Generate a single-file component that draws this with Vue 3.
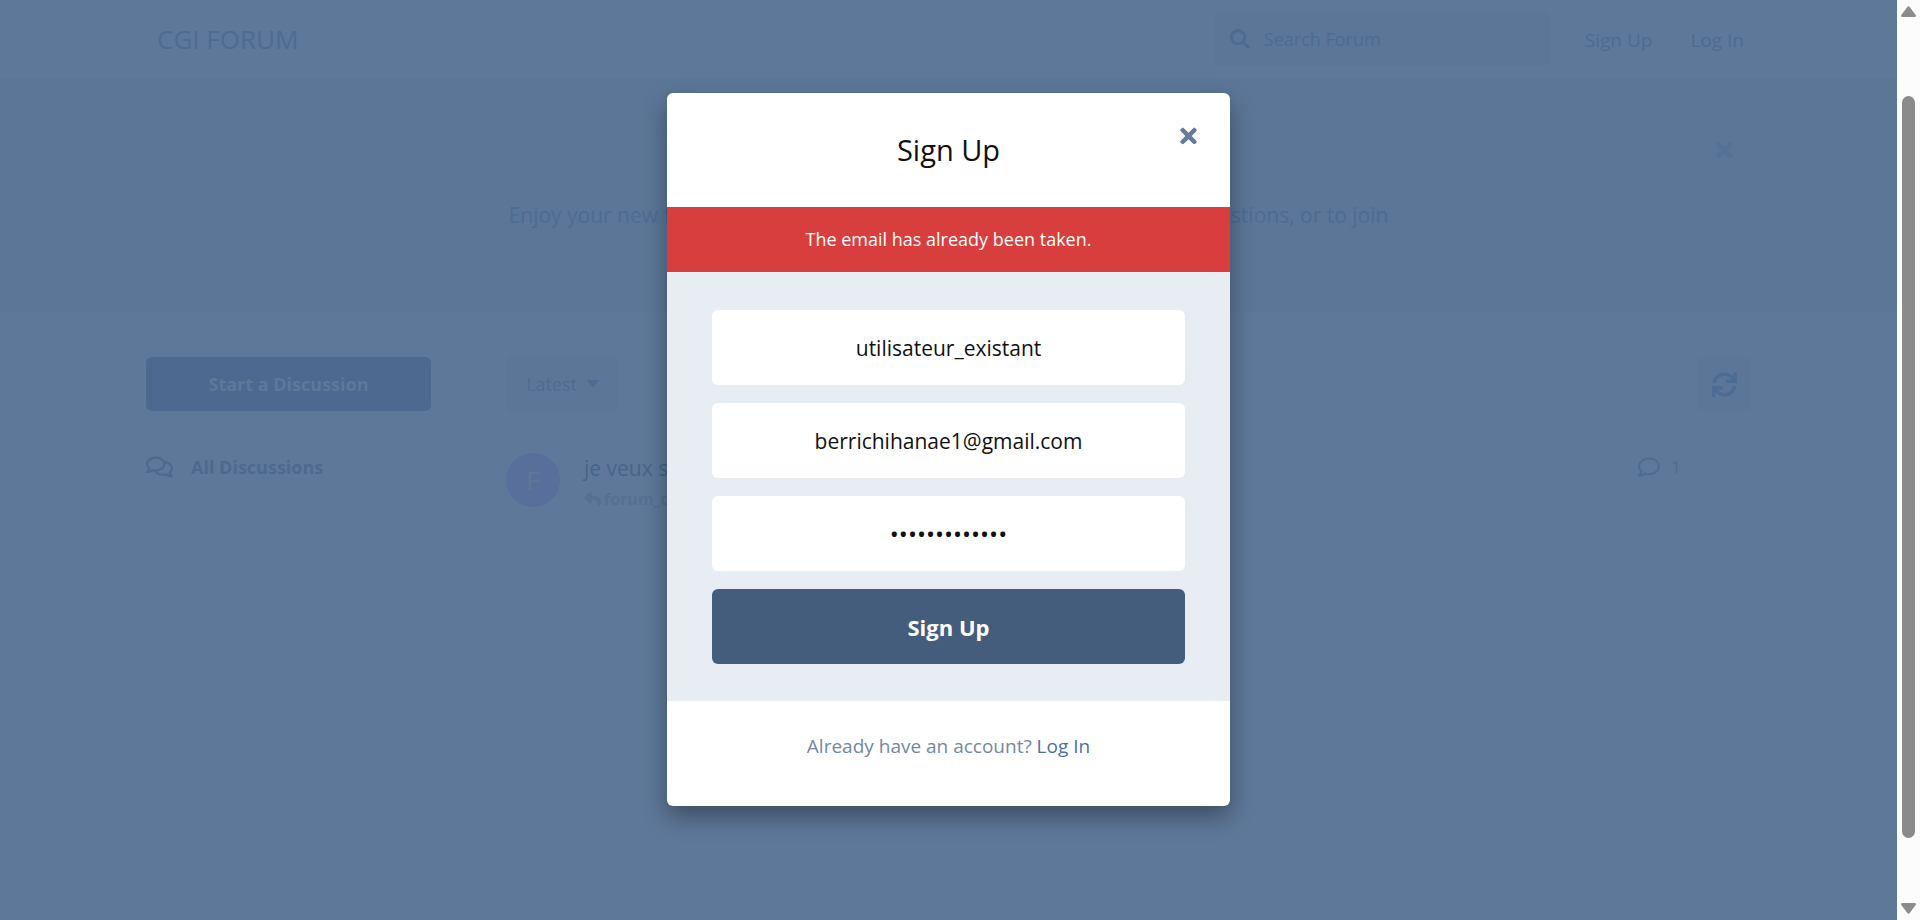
<script setup>
import { ref } from 'vue'

const username = ref('utilisateur_existant')
const email = ref('berrichihanae1@gmail.com')
const password = ref('motdepasse123')
const search = ref('')

const icons = {
  times: 'M242.72 256l100.07-100.07c12.28-12.28 12.28-32.19 0-44.48l-22.24-22.24c-12.28-12.28-32.19-12.28-44.48 0L176 189.28 75.93 89.21c-12.28-12.28-32.19-12.28-44.48 0L9.21 111.45c-12.28 12.28-12.28 32.19 0 44.48L109.28 256 9.21 356.07c-12.28 12.28-12.28 32.19 0 44.48l22.24 22.24c12.28 12.28 32.2 12.28 44.48 0L176 322.72l100.07 100.07c12.28 12.28 32.2 12.28 44.48 0l22.24-22.24c12.28-12.28 12.28-32.19 0-44.48L242.72 256z',
  search: 'M505 442.7L405.3 343c-4.5-4.5-10.6-7-17-7H372c27.6-35.3 44-79.7 44-128C416 93.1 322.9 0 208 0S0 93.1 0 208s93.1 208 208 208c48.3 0 92.7-16.4 128-44v16.3c0 6.4 2.5 12.5 7 17l99.7 99.7c9.4 9.4 24.6 9.4 33.9 0l28.3-28.3c9.4-9.4 9.4-24.6.1-34zM208 336c-70.7 0-128-57.2-128-128 0-70.7 57.2-128 128-128 70.7 0 128 57.2 128 128 0 70.7-57.2 128-128 128z',
  reply: 'M8.309 189.836L184.313 37.851C199.719 24.546 224 35.347 224 56.015v80.053c160.629 1.839 288 34.032 288 186.258 0 61.441-39.581 122.309-83.333 154.132-13.653 9.931-33.111-2.533-28.077-18.631 45.344-145.012-21.507-183.51-176.59-185.742V360c0 20.7-24.3 31.453-39.687 18.164l-176.004-152c-11.071-9.562-11.086-26.753 0-36.328z',
  comment: 'M256 32C114.6 32 0 125.1 0 240c0 47.6 19.9 91.2 52.9 126.3C38 405.7 7 439.1 6.5 439.5c-6.6 7-8.4 17.2-4.6 26S14.4 480 24 480c61.5 0 110-25.7 139.1-46.3C192 442.8 223.2 448 256 448c141.4 0 256-93.1 256-208S397.4 32 256 32zm0 368c-26.7 0-53.1-4.1-78.4-12.1l-22.7-7.2-19.5 13.8c-14.3 10.1-33.9 21.4-57.5 29 7.3-12.1 14.4-25.7 19.9-40.2l10.6-28.1-20.6-21.8C69.7 314.1 48 282.2 48 240c0-88.2 93.3-160 208-160s208 71.8 208 160-93.3 160-208 160z',
  comments: 'M532 386.2c27.5-27.1 44-61.1 44-98.2 0-80-76.5-146.1-176.2-157.9C368.3 72.5 294.3 32 208 32 93.1 32 0 103.6 0 192c0 37 16.5 71 44 98.2-15.3 30.7-37.3 54.5-37.7 54.9-6.3 6.7-8.1 16.5-4.4 25 3.6 8.5 12 14 21.2 14 53.5 0 96.7-20.2 125.2-38.8 9.2 2.1 18.7 3.7 28.4 4.9C208.1 407.6 281.8 448 368 448c20.8 0 40.8-2.4 59.8-6.8C456.3 459.7 499.4 480 553 480c9.2 0 17.5-5.5 21.2-14 3.6-8.5 1.9-18.3-4.4-25-.4-.3-22.5-24.1-37.8-54.8zm-392.8-92.3L122.1 305c-14.1 9.1-28.5 16.3-43.1 21.4 2.7-4.7 5.4-9.7 8-14.8l15.5-31.1L77.7 256C64.2 242.6 48 220.7 48 192c0-60.7 73.3-112 160-112s160 51.3 160 112-73.3 112-160 112c-16.5 0-33-1.9-49-5.6l-19.8-4.5zM498.3 352l-24.7 24.4 15.5 31.1c2.6 5.1 5.3 10.1 8 14.8-14.6-5.1-29-12.3-43.1-21.4l-17.1-11.1-19.9 4.6c-16 3.7-32.5 5.6-49 5.6-54 0-102.2-20.1-131.3-49.7C338 339.5 416 272.9 416 192c0-3.4-.4-6.7-.7-10C479.7 196.5 528 238.8 528 288c0 28.7-16.2 50.6-29.7 64z',
  sync: 'M440.65 12.57l4 82.77A247.16 247.16 0 0 0 255.83 8C134.73 8 33.91 94.92 12.29 209.82A12 12 0 0 0 24.09 224h49.05a12 12 0 0 0 11.67-9.26 175.91 175.91 0 0 1 317-56.94l-101.46-4.86a12 12 0 0 0-12.57 12v47.41a12 12 0 0 0 12 12H500a12 12 0 0 0 12-12V12a12 12 0 0 0-12-12h-47.37a12 12 0 0 0-11.98 12.57zM255.83 432a175.61 175.61 0 0 1-146-77.8l101.8 4.87a12 12 0 0 0 12.57-12v-47.4a12 12 0 0 0-12-12H12a12 12 0 0 0-12 12V500a12 12 0 0 0 12 12h47.35a12 12 0 0 0 12-12.6l-4.15-82.57A247.17 247.17 0 0 0 255.83 504c121.11 0 221.93-86.92 243.55-201.82a12 12 0 0 0-11.8-14.18h-49.05a12 12 0 0 0-11.67 9.26A175.86 175.86 0 0 1 255.83 432z',
}
</script>

<template>
  <div class="window">
    <div class="page">
      <header class="header">
        <a class="brand" href="#">CGI FORUM</a>
        <div class="header-side">
          <label class="search">
            <svg class="icon-search" viewBox="0 0 512 512" aria-hidden="true"><path :d="icons.search" /></svg>
            <input v-model="search" type="search" placeholder="Search Forum" aria-label="Search Forum" />
          </label>
          <nav class="session">
            <button type="button">Sign Up</button>
            <button type="button">Log In</button>
          </nav>
        </div>
      </header>

      <section class="hero">
        <button class="hero-close" type="button" aria-label="Dismiss">
          <svg class="icon-times" viewBox="0 0 352 512" aria-hidden="true"><path :d="icons.times" /></svg>
        </button>
        <p>Enjoy your new forum! Hop over to discuss.flarum.org if you have any questions, or to join</p>
      </section>

      <main class="content">
        <aside class="sidebar">
          <button class="start" type="button">Start a Discussion</button>
          <a class="all" href="#">
            <svg viewBox="0 0 576 512" aria-hidden="true"><path :d="icons.comments" /></svg>
            All Discussions
          </a>
        </aside>
        <div class="listing">
          <div class="toolbar">
            <button class="sort" type="button">
              Latest
              <svg viewBox="0 0 12 8" aria-hidden="true"><path d="M1 0h10q1 0 .6 1L6.700 7q-.7.8-1.400 0L.4 1Q0 0 1 0z" /></svg>
            </button>
            <button class="refresh" type="button" aria-label="Refresh">
              <svg viewBox="0 0 512 512" aria-hidden="true"><path :d="icons.sync" /></svg>
            </button>
          </div>
          <article class="discussion">
            <span class="avatar">F</span>
            <div class="summary">
              <h3>je veux s</h3>
              <div class="reply">
                <svg viewBox="0 0 512 512" aria-hidden="true"><path :d="icons.reply" /></svg>
                <strong>forum_c</strong>
              </div>
            </div>
            <span class="count">
              <svg viewBox="0 0 512 512" aria-hidden="true"><path :d="icons.comment" /></svg>
              1
            </span>
          </article>
        </div>
      </main>

      <div class="overlay">
        <section class="modal" role="dialog" aria-modal="true" aria-labelledby="modal-title">
          <div class="modal-head">
            <h2 id="modal-title">Sign Up</h2>
            <button class="modal-close" type="button" aria-label="Close">
              <svg class="icon-times" viewBox="0 0 352 512" aria-hidden="true"><path :d="icons.times" /></svg>
            </button>
          </div>
          <div class="alert" role="alert">The email has already been taken.</div>
          <form class="fields" @submit.prevent>
            <input v-model="username" type="text" aria-label="Username" />
            <input v-model="email" type="email" aria-label="Email" />
            <input v-model="password" type="password" aria-label="Password" />
            <button type="submit">Sign Up</button>
          </form>
          <p class="modal-foot">Already have an account? <a href="#">Log In</a></p>
        </section>
      </div>
    </div>

    <div class="scrollbar" aria-hidden="true">
      <svg viewBox="0 0 15 11"><path d="M6.300 1Q7.500-.5 8.700 1l6 8q.8 2-1.200 2h-12q-2 0-1.200-2z" /></svg>
      <div class="track"><div class="thumb"></div></div>
      <svg viewBox="0 0 15 11"><path d="M6.300 10q1.200 1.500 2.400 0l6-8q.8-2-1.200-2h-12q-2 0-1.200 2z" /></svg>
    </div>
  </div>
</template>

<style>
body {
  margin: 0;
  overflow: hidden;
}
</style>

<style scoped>
.window {
  display: grid;
  grid-template-columns: 1fr 23px;
  height: 100vh;
  font-family: "Open Sans", "Noto Sans", sans-serif;
  font-size: 18px;
  line-height: 28px;
  color: #4d6c94;
}
.window * {
  box-sizing: border-box;
}
button,
input {
  font: inherit;
  color: inherit;
  border: 0;
  margin: 0;
  padding: 0;
  background: none;
  outline: 0;
}
button {
  cursor: pointer;
}
a {
  color: inherit;
  text-decoration: none;
}
svg {
  display: block;
  fill: currentColor;
  flex: none;
}
h2,
h3,
p {
  margin: 0;
  font-weight: 400;
}
.page {
  position: relative;
  background: #5e7899;
  overflow: hidden;
}

.header {
  display: flex;
  align-items: center;
  justify-content: space-between;
  height: 78px;
  padding: 0 153px 0 157px;
}
.brand {
  font-size: 26px;
}
.header-side {
  display: flex;
  align-items: center;
  gap: 34px;
}
.search {
  display: flex;
  align-items: center;
  gap: 14px;
  width: 337px;
  height: 54px;
  padding: 0 16px;
  border-radius: 6px;
  background: #5c7697;
}
.search input {
  flex: 1;
  min-width: 0;
}
.search input::placeholder {
  color: inherit;
  opacity: 1;
}
.icon-search {
  width: 20px;
  height: 20px;
}
.session {
  display: flex;
  gap: 38px;
  padding-top: 2px;
  font-size: 19px;
}

.hero {
  position: relative;
  height: 234px;
  padding: 119px 146px 0;
  background: #5c7697;
  text-align: center;
  font-size: 21px;
  line-height: 36px;
}
.hero-close {
  position: absolute;
  top: 54px;
  right: 155px;
  display: grid;
  place-items: center;
  width: 36px;
  height: 36px;
  color: #547196;
}
.icon-times {
  width: 17px;
  height: 24px;
}

.content {
  display: grid;
  grid-template-columns: 285px 1fr;
  gap: 75px;
  padding: 45px 146px 0;
}
.sidebar {
  display: flex;
  flex-direction: column;
  gap: 42px;
}
.start {
  height: 54px;
  border-radius: 6px;
  background: #4d698f;
  color: #5e7899;
  font-weight: 700;
}
.all {
  display: flex;
  align-items: center;
  gap: 18px;
  color: #4d698f;
  font-weight: 700;
}
.all svg {
  width: 27px;
  height: 24px;
}
.toolbar {
  display: flex;
  justify-content: space-between;
}
.sort {
  display: flex;
  align-items: center;
  gap: 10px;
  height: 54px;
  padding: 0 20px;
  border-radius: 6px;
  background: #5c7697;
}
.sort svg {
  width: 12px;
  height: 8px;
}
.refresh {
  display: grid;
  place-items: center;
  width: 54px;
  height: 54px;
  border-radius: 6px;
  background: #5c7697;
}
.refresh svg {
  width: 25px;
  height: 25px;
}
.discussion {
  display: flex;
  align-items: flex-start;
  margin-top: 42px;
  padding-right: 70px;
}
.avatar {
  width: 54px;
  height: 54px;
  border-radius: 50%;
  background: #576f9a;
  color: #5e7899;
  text-align: center;
  font-size: 26px;
  line-height: 54px;
}
.summary {
  flex: 1;
  margin-left: 24px;
}
.summary h3 {
  font-size: 21px;
  line-height: 30px;
  color: #46648a;
}
.reply {
  display: flex;
  align-items: center;
  gap: 3px;
  padding-top: 2px;
  font-size: 16px;
  color: #547092;
}
.reply svg {
  width: 17px;
  height: 17px;
}
.count {
  display: flex;
  align-items: center;
  gap: 11px;
}
.count svg {
  width: 22px;
  height: 22px;
}

.overlay {
  position: absolute;
  inset: 0;
  display: flex;
  justify-content: center;
  align-items: flex-start;
  padding-top: 93px;
}
.modal {
  width: 563px;
  border-radius: 6px;
  background: #fff;
  box-shadow: 0 11px 23px rgba(0, 0, 0, 0.35);
  color: #111;
  text-align: center;
  overflow: hidden;
}
.modal-head {
  position: relative;
  padding: 38px;
}
.modal-head h2 {
  font-size: 29px;
  line-height: 38px;
}
.modal-close {
  position: absolute;
  top: 25px;
  right: 24px;
  display: grid;
  place-items: center;
  width: 36px;
  height: 36px;
  color: #667d99;
}
.alert {
  padding: 18px 38px 19px;
  background: #d83e3e;
  color: #fff;
  font-weight: 500;
}
.fields {
  display: flex;
  flex-direction: column;
  gap: 18px;
  padding: 38px 45px 37px;
  background: #e8ecf3;
  font-size: 21px;
}
.fields input {
  height: 75px;
  padding: 0 20px;
  border-radius: 6px;
  background: #fff;
  text-align: center;
}
.fields input[type="password"] {
  font-size: 24px;
}
.fields button {
  height: 75px;
  border-radius: 6px;
  background: #455d7c;
  color: #fff;
  font-size: 22px;
  font-weight: 700;
}
.modal-foot {
  padding: 31px 38px 46px;
  font-size: 19px;
  color: #7388a3;
}
.modal-foot a {
  color: #4d6fa3;
}

.scrollbar {
  display: flex;
  flex-direction: column;
  align-items: center;
  padding: 6px 0;
  background: #fcfcfc;
  color: #8b8b8b;
}
.scrollbar svg {
  width: 15px;
  height: 11px;
}
.track {
  flex: 1;
  padding-top: 79px;
}
.thumb {
  width: 13px;
  height: 92%;
  border-radius: 7px;
  background: #8b8b8b;
}
</style>
